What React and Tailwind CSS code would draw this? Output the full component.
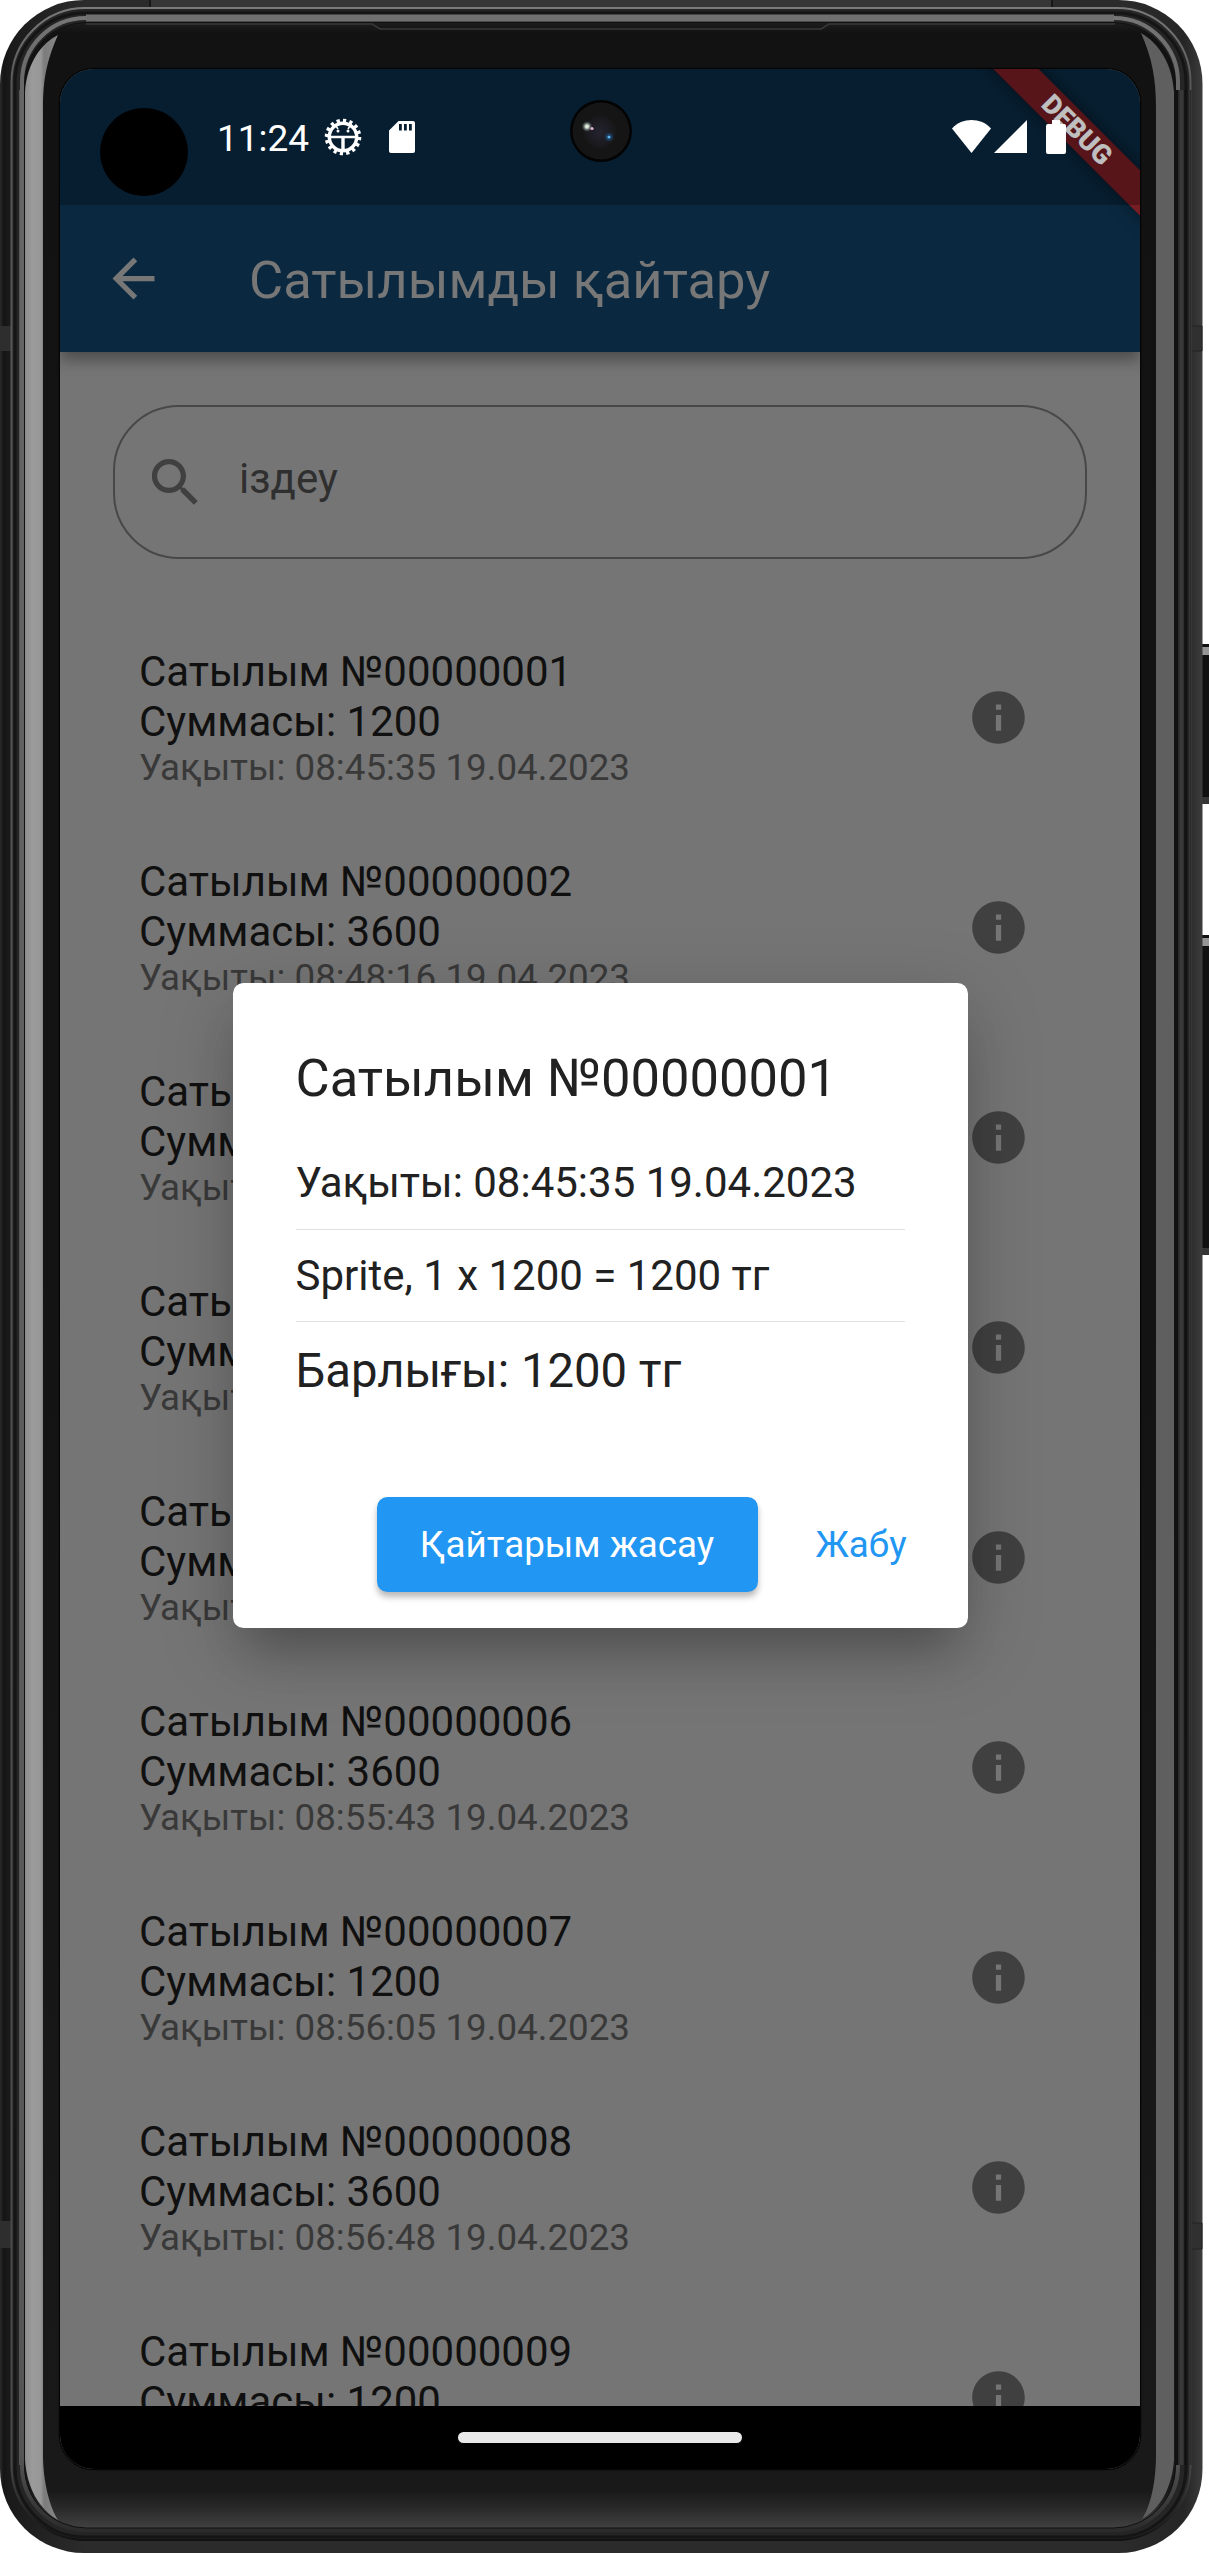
import React from "react";

const sales = [
  { id: "00000001", sum: 1200, time: "08:45:35 19.04.2023" },
  { id: "00000002", sum: 3600, time: "08:48:16 19.04.2023" },
  { id: "00000003", sum: 1200, time: "08:50:21 19.04.2023" },
  { id: "00000004", sum: 3600, time: "08:52:40 19.04.2023" },
  { id: "00000005", sum: 1200, time: "08:54:12 19.04.2023" },
  { id: "00000006", sum: 3600, time: "08:55:43 19.04.2023" },
  { id: "00000007", sum: 1200, time: "08:56:05 19.04.2023" },
  { id: "00000008", sum: 3600, time: "08:56:48 19.04.2023" },
  { id: "00000009", sum: 1200, time: "08:57:30 19.04.2023" },
];

// Illustration of the handset body: metal rails, glass and side buttons.
function PhoneBody() {
  return (
    <svg className="absolute inset-0" width="1209" height="2553" viewBox="0 0 1209 2553" fill="none">
      <defs>
        <linearGradient id="rail" x1="0" x2="1202" y1="0" y2="0" gradientUnits="userSpaceOnUse">
          <stop offset="0" stopColor="#2a2a2a" />
          <stop offset="0.003" stopColor="#151515" />
          <stop offset="0.008" stopColor="#1a1a1a" />
          <stop offset="0.07" stopColor="#2b2b2b" />
          <stop offset="0.93" stopColor="#2b2b2b" />
          <stop offset="0.985" stopColor="#262626" />
          <stop offset="0.993" stopColor="#303030" />
          <stop offset="1" stopColor="#3c3c3c" />
        </linearGradient>
        <linearGradient id="outerLine" x1="0" x2="0" y1="0" y2="1">
          <stop offset="0" stopColor="#7a7a7a" />
          <stop offset="0.03" stopColor="#585858" />
          <stop offset="0.97" stopColor="#484848" />
          <stop offset="1" stopColor="#111111" />
        </linearGradient>
        <linearGradient id="innerLine" x1="0" x2="0" y1="0" y2="1">
          <stop offset="0" stopColor="#757575" />
          <stop offset="0.03" stopColor="#666666" />
          <stop offset="0.97" stopColor="#555555" />
          <stop offset="1" stopColor="#2c2c2c" />
        </linearGradient>
        <linearGradient id="glass" x1="0" x2="0" y1="23" y2="2528" gradientUnits="userSpaceOnUse">
          <stop offset="0" stopColor="#1c1c1c" />
          <stop offset="0.004" stopColor="#121212" />
          <stop offset="0.5" stopColor="#131313" />
          <stop offset="0.985" stopColor="#191919" />
          <stop offset="0.992" stopColor="#292929" />
          <stop offset="1" stopColor="#414141" />
        </linearGradient>
        <linearGradient id="leftGlow" x1="25" x2="60" y1="0" y2="0" gradientUnits="userSpaceOnUse">
          <stop offset="0" stopColor="#8c8c8c" />
          <stop offset="0.2" stopColor="#9b9b9b" />
          <stop offset="0.45" stopColor="#979797" />
          <stop offset="0.55" stopColor="#7c7c7c" />
          <stop offset="1" stopColor="#888888" />
        </linearGradient>
      </defs>
      <rect x="1199" y="644" width="10" height="160" fill="#111111" />
      <rect x="1202" y="647" width="7" height="8" fill="#969696" />
      <rect x="1202" y="797" width="7" height="7" fill="#363636" />
      <rect x="1199" y="935" width="10" height="320" fill="#111111" />
      <rect x="1202" y="938" width="7" height="8" fill="#969696" />
      <rect x="1202" y="1248" width="7" height="7" fill="#363636" />
      <rect x="0" y="0" width="1202.5" height="2553" rx="84" fill="url(#rail)" />
      <path d="M150 0H1052V8H150Z" fill="#363636" />
      <path d="M150 0V8M1052 0V10" stroke="#181818" strokeWidth="2" />
      <path d="M0 326H11V351H0ZM0 2221H11V2248H0Z" fill="#2e2e2e" />
      <path d="M1190 326H1202V351H1190ZM1190 2223H1202V2249H1190Z" fill="#303030" stroke="#222222" />
      <rect x="11.5" y="8" width="1179" height="2532" rx="74" fill="#252525" stroke="url(#outerLine)" strokeWidth="2" />
      <path d="M1190.500 90V2465" stroke="#2c2c2c" strokeWidth="2" />
      <rect x="15" y="13" width="1171" height="2524" rx="70" stroke="#151515" strokeWidth="3" />
      <rect x="22" y="18" width="1156" height="2512" rx="64" stroke="url(#innerLine)" strokeWidth="4" />
      <path d="M86 18H1114" stroke="#707070" strokeWidth="7" />
      <path d="M19.5 90V2465" stroke="#555555" strokeWidth="1" />
      <path d="M1178 90V2465" stroke="#2a2a2a" strokeWidth="5" />
      <path d="M1177 90V2465M1185.500 90V2465" stroke="#111111" strokeWidth="2" />
      <path d="M1181.500 90V2465" stroke="#393939" strokeWidth="4" />
      <rect x="24.500" y="22.500" width="1151" height="2505.500" rx="62" fill="url(#glass)" stroke="#111111" />
      <path d="M86 24H372L380 29H821L829 24H1115" stroke="#383838" strokeWidth="1.500" />
      <path d="M25 2460V92C27 62 42 43 58 35C47 60 43 78 43 108V2455C43 2482 50 2508 58 2520C39 2509 27 2488 25 2460Z" fill="url(#leftGlow)" />
      <path d="M1174 2460V92C1172 62 1158 43 1141 33C1152 58 1156 78 1156 108V2455C1156 2480 1151 2506 1142 2519C1160 2509 1172 2488 1174 2460Z" fill="#5f5f5f" />
      <rect x="59.500" y="68.500" width="1081" height="2401" rx="34.500" stroke="#050505" strokeWidth="1.500" />
    </svg>
  );
}

function InfoIcon() {
  return (
    <svg className="size-[63px] shrink-0" viewBox="0 0 24 24" fill="#404040">
      <path d="M12 2C6.480 2 2 6.480 2 12s4.480 10 10 10 10-4.480 10-10S17.520 2 12 2zm1 15h-2v-6h2v6zm0-8h-2V7h2v2z" />
    </svg>
  );
}

function StatusBar() {
  return (
    <div className="absolute inset-x-0 top-0 z-20 h-[136px] bg-black/25">
      <div className="absolute left-[40px] top-[39px] size-[88px] rounded-full bg-black" />
      <div className="flex h-full items-start pl-[157px] pt-[47px]">
        <span className="mt-px w-[107px] text-[37px] leading-[43px] text-white">11:24</span>
        <svg className="mt-[2px] size-[38px]" viewBox="-19 -19 38 38" fill="none" stroke="#fff">
          <circle r="16.500" strokeWidth="3.600" pathLength="32" strokeDasharray="1 1" />
          <circle r="13.700" strokeWidth="3.400" />
          <path d="M-13 0H13" strokeWidth="2.600" />
          <path d="M0 0V13" strokeWidth="3.400" />
          <path d="M-7-11L-5-8M7-11L5-8" strokeWidth="1.500" />
          <circle cx="-5" cy="-6" r="1.500" fill="#fff" stroke="none" />
          <circle cx="5" cy="-6" r="1.500" fill="#fff" stroke="none" />
        </svg>
        <svg className="ml-[27px] mt-[5px] h-[32px] w-[26px]" viewBox="0 0 26 32" fill="#fff">
          <path fillRule="evenodd" d="M9.500 0H24a2 2 0 0 1 2 2V30a2 2 0 0 1-2 2H2a2 2 0 0 1-2-2V9.500ZM10 3V9.500H12.800V3ZM15 3V9.500H17.800V3ZM20 3V9.500H22.800V3Z" />
        </svg>
        <svg className="ml-[537px] mt-[4px] h-[34px] w-[39px]" viewBox="0 0 39 34" fill="#fff">
          <path d="M0 8.500C10-2.700 29-2.700 39 8.500L19.500 33Z" />
        </svg>
        <svg className="ml-[3px] mt-[4px] h-[34px] w-[33px]" viewBox="0 0 33 34" fill="#fff">
          <path d="M33 0V33H0Z" />
        </svg>
        <svg className="ml-[19px] mt-[4px] h-[34px] w-[20px]" viewBox="0 0 20 34" fill="#fff">
          <path d="M6 0H14V4H18a2 2 0 0 1 2 2V32a2 2 0 0 1-2 2H2a2 2 0 0 1-2-2V6a2 2 0 0 1 2-2H6Z" />
        </svg>
      </div>
      <svg className="absolute left-[510px] top-[31px] size-[62px]" viewBox="0 0 62 62">
        <defs>
          <radialGradient id="lens">
            <stop offset="0" stopColor="#25242f" />
            <stop offset="0.8" stopColor="#1a1a1f" />
            <stop offset="1" stopColor="#191919" />
          </radialGradient>
          <radialGradient id="flare">
            <stop offset="0" stopColor="#ffffff" />
            <stop offset="0.3" stopColor="#c9d8c4" />
            <stop offset="1" stopColor="#4e5e70" stopOpacity="0" />
          </radialGradient>
        </defs>
        <circle cx="31" cy="31" r="31" fill="#030303" />
        <circle cx="31" cy="31" r="28.500" fill="#151515" />
        <circle cx="30" cy="32" r="16" fill="url(#lens)" />
        <circle cx="17" cy="26.500" r="5.500" fill="url(#flare)" />
        <circle cx="22" cy="28.500" r="1.600" fill="#e6b3d4" />
        <circle cx="39" cy="37" r="4" fill="#1b4a77" opacity="0.6" />
        <circle cx="39" cy="37" r="1.600" fill="#5fb4f0" />
      </svg>
    </div>
  );
}

function DebugBanner() {
  return (
    <div className="absolute right-0 top-0 z-10 size-[240px] overflow-hidden">
      <div className="absolute left-[-3px] top-[45px] flex h-[32px] w-[360px] rotate-45 items-center justify-center bg-[#751d23] text-[27px] font-black leading-[32px] text-white shadow-[0_0_16px_rgba(0,0,0,0.5)]">
        <span>DEBUG</span>
      </div>
    </div>
  );
}

function SaleRow({ sale }) {
  return (
    <li className="flex h-[210px] shrink-0 items-center justify-between pl-[79px] pr-[110px]">
      <div>
        <div className="pt-px text-[42px] leading-[50px] text-[#101010]">Сатылым №{sale.id}</div>
        <div className="text-[42px] leading-[50px] text-[#101010]">Суммасы: {sale.sum}</div>
        <div className="text-[36.75px] leading-[42px] text-[#393939]">Уақыты: {sale.time}</div>
      </div>
      <InfoIcon />
    </li>
  );
}

function SaleDialog() {
  return (
    <div className="absolute left-[172.500px] top-[913.500px] z-30 flex h-[645.500px] w-[735px] flex-col rounded-[10.500px] bg-white px-[63px] text-[#212121] shadow-[0_34px_44px_-16px_rgba(0,0,0,0.22),0_20px_75px_4px_rgba(0,0,0,0.17)]">
      <h2 className="mt-[65px] text-[52.500px] leading-[61px]">Сатылым №00000001</h2>
      <div className="mt-[49px] border-b border-[#e0e0e0] pb-[21px] text-[42px] leading-[50px]">Уақыты: 08:45:35 19.04.2023</div>
      <div className="mt-[21px] border-b border-[#e0e0e0] pb-[20px] text-[42px] leading-[50px]">Sprite, 1 x 1200 = 1200 тг</div>
      <div className="mt-[21px] text-[47.250px] leading-[56px]">Барлығы: 1200 тг</div>
      <div className="-mr-[23px] mt-auto mb-[36.500px] flex items-center justify-end gap-[37px]">
        <button className="h-[94.500px] w-[381px] rounded-[10.500px] bg-[#2196f3] pt-px text-[36.750px] leading-[43px] text-white shadow-[0_5px_6px_rgba(0,0,0,0.28)]">Қайтарым жасау</button>
        <button className="h-[94.500px] w-[133px] pt-px text-[36.750px] leading-[43px] text-[#2196f3]">Жабу</button>
      </div>
    </div>
  );
}

export default function App() {
  return (
    <div className="relative h-[2553px] w-[1209px] overflow-hidden bg-white pl-[60px] pt-[69px] font-['Roboto',sans-serif]">
      <PhoneBody />
      <div className="relative flex h-[2400px] w-[1080px] flex-col overflow-hidden rounded-[34px] bg-[#757575]">
        <StatusBar />
        <DebugBanner />
        <header className="relative flex h-[283px] shrink-0 items-center bg-[#0a2941] pl-[42px] pt-[136px] shadow-[0_8px_14px_rgba(0,0,0,0.35)]">
          <svg className="size-[63px]" viewBox="0 0 24 24" fill="#777777">
            <path d="M20 11H7.830l5.590-5.590L12 4l-8 8 8 8 1.410-1.410L7.830 13H20v-2z" />
          </svg>
          <h1 className="ml-[84px] mt-[3px] text-[52.500px] leading-[61px] text-[#777777]">Сатылымды қайтару</h1>
        </header>
        <div className="mx-[53px] mt-[53px] flex h-[154px] shrink-0 items-center rounded-[66px] border-2 border-[#484848] pl-[29px]">
          <svg className="size-[63px]" viewBox="0 0 24 24" fill="#404040">
            <path d="M15.500 14h-.790l-.280-.270C15.410 12.590 16 11.110 16 9.500 16 5.910 13.090 3 9.500 3S3 5.910 3 9.500 5.910 16 9.500 16c1.610 0 3.090-.590 4.230-1.570l.270.280v.790l5 4.990L20.490 19l-4.990-5zm-6 0C7.010 14 5 11.990 5 9.500S7.010 5 9.500 5 14 7.010 14 9.500 11.990 14 9.500 14z" />
          </svg>
          <span className="mb-[6px] ml-[32px] text-[42px] leading-[50px] text-[#2f2f2f]">іздеу</span>
        </div>
        <ul className="mt-[53.500px] flex min-h-0 flex-1 flex-col overflow-hidden">
          {sales.map((sale) => (
            <SaleRow key={sale.id} sale={sale} />
          ))}
        </ul>
        <div className="flex h-[63px] shrink-0 items-center justify-center bg-black">
          <div className="h-[11px] w-[284px] rounded-full bg-[#e9e9e9]" />
        </div>
        <SaleDialog />
      </div>
    </div>
  );
}
